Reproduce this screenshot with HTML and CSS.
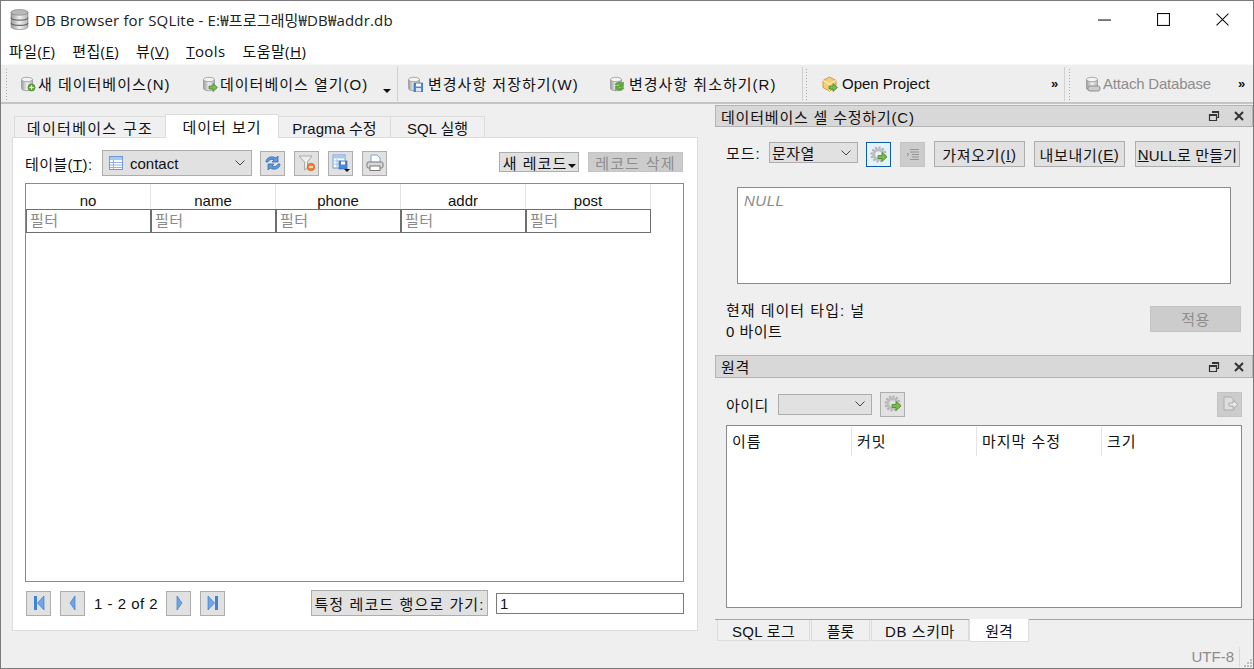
FILE: index.html
```html
<!DOCTYPE html>
<html lang="ko">
<head>
    <meta charset="UTF-8">
    <title>DB Browser for SQLite</title>
    <link rel="stylesheet" href="styles.css">
</head>
<body>
<svg class="defs" width="0" height="0">
    <defs>
        <linearGradient id="can" x1="0" x2="1" y1="0" y2="0">
            <stop offset="0" stop-color="#9c9c9c"/>
            <stop offset="0.5" stop-color="#f0f0f0"/>
            <stop offset="1" stop-color="#b4b4b4"/>
        </linearGradient>
        <symbol id="db" viewBox="0 0 16 16">
            <path d="M1.5 3.5v9c0 1.3 2.5 2.2 5.5 2.2s5.5-.9 5.5-2.2v-9z" fill="url(#can)" stroke="#999" stroke-width=".8"/>
            <ellipse cx="7" cy="3.5" rx="5.5" ry="2.2" fill="#f4f4f4" stroke="#999" stroke-width=".8"/>
        </symbol>
        <symbol id="gear" viewBox="0 0 18 18">
            <circle cx="8.5" cy="8.5" r="4.800" fill="none" stroke="#bdbdbd" stroke-width="3"/>
            <circle cx="8.5" cy="8.5" r="7" fill="none" stroke="#b0b0b0" stroke-width="2" stroke-dasharray="2 1.65"/>
            <path d="M8 9.500h4v-3l5 4.500-5 4.500v-3H8z" fill="#7cbc4a" stroke="#3f7d22" stroke-width=".7"/>
        </symbol>
        <symbol id="first" viewBox="0 0 14 16">
            <rect x="2" y="1" width="3" height="14" fill="#3f82d8"/>
            <path d="M12 1v14L5.500 8z" fill="#6ea6e8" stroke="#2f6fc4" stroke-width=".6"/>
        </symbol>
        <symbol id="prev" viewBox="0 0 14 16">
            <path d="M9 1v14L4 8z" fill="#6ea6e8" stroke="#2f6fc4" stroke-width=".6"/>
        </symbol>
        <symbol id="next" viewBox="0 0 14 16">
            <path d="M5 1v14l5-7z" fill="#6ea6e8" stroke="#2f6fc4" stroke-width=".6"/>
        </symbol>
        <symbol id="last" viewBox="0 0 14 16">
            <rect x="9" y="1" width="3" height="14" fill="#3f82d8"/>
            <path d="M2 1v14l6.500-7z" fill="#6ea6e8" stroke="#2f6fc4" stroke-width=".6"/>
        </symbol>
        <symbol id="undock" viewBox="0 0 12 12">
            <path d="M4 1.500h6.500v6H8.500M1.500 4.500h7v6h-7zM1.500 5.500h7M4 2.500h6.500" fill="none" stroke="#333" stroke-width="1.200"/>
        </symbol>
        <symbol id="shut" viewBox="0 0 12 12">
            <path d="M2 2l8 8M10 2l-8 8" fill="none" stroke="#333" stroke-width="2"/>
        </symbol>
    </defs>
</svg>

<div class="window">
    <!-- Title bar -->
    <header class="titlebar">
        <svg class="app-icon" viewBox="0 0 18 20">
            <path d="M1 3v14c0 1.500 3.500 2.600 8 2.600s8-1.100 8-2.600V3z" fill="url(#can)" stroke="#777" stroke-width=".6"/>
            <path d="M1 8c0 1.500 3.500 2.600 8 2.600s8-1.100 8-2.600M1 13c0 1.500 3.500 2.600 8 2.600s8-1.100 8-2.600" fill="none" stroke="#666" stroke-width="1.100"/>
            <ellipse cx="9" cy="3.200" rx="8" ry="2.700" fill="#b9b9b9" stroke="#777" stroke-width=".6"/>
        </svg>
        <span class="title-text">DB Browser for SQLite - E:₩프로그래밍₩DB₩addr.db</span>
        <div class="win-buttons">
            <svg viewBox="0 0 12 12"><path d="M0 6.500h12" stroke="#111" fill="none"/></svg>
            <svg viewBox="0 0 12 12"><rect x=".5" y=".5" width="11" height="11" stroke="#111" fill="none"/></svg>
            <svg viewBox="0 0 12 12"><path d="M.5.500l11 11M11.500.500l-11 11" stroke="#111" fill="none"/></svg>
        </div>
    </header>

    <!-- Menu -->
    <nav class="menubar">
        <span>파일(<u>F</u>)</span>
        <span>편집(<u>E</u>)</span>
        <span>뷰(<u>V</u>)</span>
        <span><u>T</u>ools</span>
        <span>도움말(<u>H</u>)</span>
    </nav>

    <!-- Toolbar -->
    <div class="toolbar">
        <div class="grip"></div>
        <div class="tool tool-new">
            <svg class="ico16" viewBox="0 0 16 16"><use href="#db"/><circle cx="11.500" cy="11.500" r="3.500" fill="#6bb03f" stroke="#3f7d22" stroke-width=".7"/><path d="M11.500 9.500v4M9.500 11.500h4" stroke="#fff"/></svg>
            <span>새 데이터베이스(N)</span>
        </div>
        <div class="tool tool-open">
            <svg class="ico16" viewBox="0 0 16 16"><use href="#db"/><path d="M7 10h4V7.500l4.500 4-4.500 4V13H7z" fill="#7cbc4a" stroke="#3f7d22" stroke-width=".7"/></svg>
            <span>데이터베이스 열기(O)</span>
            <i class="drop-arrow"></i>
        </div>
        <div class="sep sep-a"></div>
        <div class="tool tool-save">
            <svg class="ico16" viewBox="0 0 16 16"><use href="#db"/><rect x="7" y="7" width="9" height="9" fill="#4a8ad6" stroke="#2a62a8" stroke-width=".6"/><rect x="9" y="7.500" width="5" height="3" fill="#fff"/><rect x="9" y="12" width="5" height="3.500" fill="#dfe9f5"/></svg>
            <span>변경사항 저장하기(W)</span>
        </div>
        <div class="tool tool-revert">
            <svg class="ico16" viewBox="0 0 16 16"><use href="#db"/><path d="M6 8.500c1-2.500 5-3.500 7-1.500l1.500-1v4.500H10l1.500-1.500c-1.500-1-3.500-.5-4 .5z" fill="#5cae3c" stroke="#3f7d22" stroke-width=".4"/><path d="M15 12c-1 2.500-5 3.500-7 1.500l-1.500 1V10H11l-1.500 1.500c1.500 1 3.500.5 4-.5z" fill="#5cae3c" stroke="#3f7d22" stroke-width=".4"/></svg>
            <span>변경사항 취소하기(R)</span>
        </div>
        <div class="sep sep-b"></div>
        <div class="grip"></div>
        <div class="tool tool-project">
            <svg class="ico16" viewBox="0 0 16 16"><path d="M7.500 1l6.500 3.500v7L7.500 15 1 11.500v-7z" fill="#f4cf7a" stroke="#c9932e" stroke-width=".9"/><path d="M1 4.500l6.500 3.500L14 4.500M7.500 8v7" fill="none" stroke="#fff3cf"/><path d="M7 10h4V7.500l4.500 4-4.500 4V13H7z" fill="#7cbc4a" stroke="#3f7d22" stroke-width=".7"/></svg>
            <span>Open Project</span>
        </div>
        <span class="more more-a">»</span>
        <div class="sep sep-c"></div>
        <div class="grip"></div>
        <div class="tool tool-attach disabled">
            <svg class="ico16" viewBox="0 0 16 16"><use href="#db"/><rect x="3" y="10" width="12" height="5" rx="2" fill="#ccc" stroke="#8f8f8f"/></svg>
            <span>Attach Database</span>
        </div>
        <span class="more more-b">»</span>
    </div>

    <main class="workspace">
        <!-- Left: data browser -->
        <section class="browser">
            <div class="tabs">
                <span class="tab tab-1">데이터베이스 구조</span>
                <span class="tab tab-2 active">데이터 보기</span>
                <span class="tab tab-3">Pragma 수정</span>
                <span class="tab tab-4">SQL 실행</span>
            </div>
            <div class="panel">
                <div class="table-row">
                    <label class="table-label">테이블(<u>T</u>):</label>
                    <div class="combo combo-table">
                        <svg class="ico16" viewBox="0 0 16 16"><rect x="1.500" y="1.500" width="13" height="13" fill="#fff" stroke="#6f9bd8"/><rect x="2" y="2" width="12" height="3" fill="#a9c8ef"/><path d="M2 7.500h12M2 10h12M2 12.500h12M5.500 5v9" stroke="#8fb3e4"/></svg>
                        <span>contact</span>
                        <svg class="chev" viewBox="0 0 10 6"><path d="M.5.500L5 5 9.500.500" fill="none" stroke="#444"/></svg>
                    </div>
                    <div class="icon-btn btn-refresh">
                        <svg class="ico18" viewBox="0 0 18 18"><path d="M2 8c0-4 5-7 10-4l2-2v6H8l2-2c-3-1.500-5 0-6 2z" fill="#5d9ae0" stroke="#2a62a8" stroke-width=".7"/><path d="M16 10c0 4-5 7-10 4l-2 2v-6h6l-2 2c3 1.500 5 0 6-2z" fill="#5d9ae0" stroke="#2a62a8" stroke-width=".7"/></svg>
                    </div>
                    <div class="icon-btn">
                        <svg class="ico18" viewBox="0 0 18 18"><path d="M1 2h13L9.500 8v6l-3 2V8z" fill="#eee" stroke="#aaa"/><circle cx="13" cy="13" r="3.800" fill="#e8833a" stroke="#bf5d18" stroke-width=".6"/><path d="M11 13h4" stroke="#fff" stroke-width="1.300"/></svg>
                    </div>
                    <div class="icon-btn">
                        <svg class="ico18" viewBox="0 0 18 18"><rect x="1" y="1" width="12" height="13" fill="#fff" stroke="#6f9bd8"/><rect x="1.500" y="1.500" width="11" height="3" fill="#a9c8ef"/><path d="M2 7h10M2 10h10M5 5v9" stroke="#9dbce6"/><rect x="7" y="7" width="8" height="8" fill="#4a8ad6" stroke="#2a62a8" stroke-width=".6"/><rect x="9" y="7.500" width="4" height="3" fill="#fff"/><path d="M12 15h6l-3 3z" fill="#111"/></svg>
                    </div>
                    <div class="icon-btn">
                        <svg class="ico18" viewBox="0 0 18 18"><path d="M5 1h6l3 3v5H5z" fill="#fff" stroke="#7ba4d8"/><rect x="1" y="8" width="16" height="6" rx="1.500" fill="#d8d8d8" stroke="#777"/><rect x="4" y="12" width="10" height="4.500" fill="#fff" stroke="#777"/></svg>
                    </div>
                    <div class="record-btns">
                        <div class="btn btn-newrec">새 레코드<i class="small-arrow"></i></div>
                        <div class="btn btn-delrec disabled">레코드 삭제</div>
                    </div>
                </div>

                <div class="grid">
                    <div class="grid-head">
                        <span>no</span><span>name</span><span>phone</span><span>addr</span><span>post</span>
                    </div>
                    <div class="grid-filter">
                        <span>필터</span><span>필터</span><span>필터</span><span>필터</span><span>필터</span>
                    </div>
                </div>

                <div class="pager">
                    <div class="icon-btn"><svg class="ico16" viewBox="0 0 14 16"><use href="#first"/></svg></div>
                    <div class="icon-btn"><svg class="ico16" viewBox="0 0 14 16"><use href="#prev"/></svg></div>
                    <span class="page-text">1 - 2 of 2</span>
                    <div class="icon-btn"><svg class="ico16" viewBox="0 0 14 16"><use href="#next"/></svg></div>
                    <div class="icon-btn"><svg class="ico16" viewBox="0 0 14 16"><use href="#last"/></svg></div>
                    <div class="btn btn-goto">특정 레코드 행으로 가기:</div>
                    <div class="goto-input">1</div>
                </div>
            </div>
        </section>

        <!-- Right: docks -->
        <aside class="docks">
            <div class="dock-title">
                <span>데이터베이스 셀 수정하기(C)</span>
                <svg viewBox="0 0 12 12"><use href="#undock"/></svg>
                <svg viewBox="0 0 12 12"><use href="#shut"/></svg>
            </div>
            <div class="mode-row">
                <label>모드:</label>
                <div class="combo combo-mode">
                    <span>문자열</span>
                    <svg class="chev" viewBox="0 0 10 6"><path d="M.5.500L5 5 9.500.500" fill="none" stroke="#444"/></svg>
                </div>
                <div class="icon-btn focused"><svg class="ico18" viewBox="0 0 18 18"><use href="#gear"/></svg></div>
                <div class="icon-btn disabled-bg">
                    <svg class="ico16" viewBox="0 0 16 16"><path d="M5 2.500h9M5 5h9M7 7.500h7M7 10h7M5 12.500h9M2 6l2 1.500L2 9" fill="none" stroke="#8c8c8c"/></svg>
                </div>
                <div class="btn btn-import">가져오기(<u>I</u>)</div>
                <div class="btn btn-export">내보내기(<u>E</u>)</div>
                <div class="btn btn-null"><u>N</u>ULL로 만들기</div>
            </div>
            <div class="cell-editor">NULL</div>
            <div class="cell-info">
                <div class="cell-text">
                    <div class="cell-type">현재 데이터 타입: 널</div>
                    <div>0 바이트</div>
                </div>
                <div class="btn btn-apply disabled">적용</div>
            </div>

            <div class="dock-title dock-remote">
                <span>원격</span>
                <svg viewBox="0 0 12 12"><use href="#undock"/></svg>
                <svg viewBox="0 0 12 12"><use href="#shut"/></svg>
            </div>
            <div class="remote-row">
                <label>아이디</label>
                <div class="combo combo-id">
                    <svg class="chev" viewBox="0 0 10 6"><path d="M.5.500L5 5 9.500.500" fill="none" stroke="#444"/></svg>
                </div>
                <div class="icon-btn"><svg class="ico18" viewBox="0 0 18 18"><use href="#gear"/></svg></div>
                <div class="icon-btn disabled-bg push-right">
                    <svg class="ico18" viewBox="0 0 18 18"><path d="M3 2h7l3 3v10H3z" fill="#ddd" stroke="#a5a5a5"/><path d="M8 8h4V5.500l5 4-5 4V11H8z" fill="#e8e8e8" stroke="#a5a5a5"/></svg>
                </div>
            </div>
            <div class="tree">
                <div class="tree-head">
                    <span>이름</span><span>커밋</span><span>마지막 수정</span><span>크기</span>
                </div>
            </div>
            <div class="dock-tabs">
                <span class="dtab dtab-1">SQL 로그</span>
                <span class="dtab dtab-2">플롯</span>
                <span class="dtab dtab-3">DB 스키마</span>
                <span class="dtab dtab-4 active">원격</span>
            </div>
        </aside>
    </main>

    <footer class="statusbar">
        <span class="encoding">UTF-8</span>
        <i class="status-sep"></i>
        <svg class="size-grip" viewBox="0 0 8 8"><path d="M6 0h2v2H6zM3 3h2v2H3zM6 3h2v2H6zM0 6h2v2H0zM3 6h2v2H3zM6 6h2v2H6z" fill="#bdbdbd"/></svg>
    </footer>
</div>
</body>
</html>
```

FILE: styles.css
```css
/* Reset */
* {
    margin: 0;
    padding: 0;
    box-sizing: border-box;
}

body {
    width: 1254px;
    height: 669px;
    overflow: hidden;
    font-family: "Liberation Sans", "Noto Sans CJK KR", sans-serif;
    font-size: 15px;
    color: #111;
    background-color: #efefef;
}

.defs {
    position: absolute;
}

.window {
    width: 1254px;
    height: 669px;
    display: flex;
    flex-direction: column;
    border: 1px solid #7a7a7a;
}

.ico16 {
    width: 16px;
    height: 16px;
    flex: none;
}

.ico18 {
    width: 18px;
    height: 18px;
    flex: none;
}

/* Title bar */
.titlebar {
    height: 37px;
    flex: none;
    display: flex;
    align-items: center;
    padding-left: 9px;
    background-color: #fff;
}

.app-icon {
    width: 19px;
    height: 21px;
}

.title-text {
    margin-left: 6px;
    font-family: "Open Sans", "Noto Sans CJK KR", sans-serif;
    font-size: 15px;
    letter-spacing: .17px;
    color: #222;
}

.win-buttons {
    margin-left: auto;
    display: flex;
    gap: 46px;
    padding-right: 24px;
}

.win-buttons svg {
    width: 13px;
    height: 13px;
}

/* Menu */
.menubar {
    height: 26px;
    flex: none;
    display: flex;
    align-items: baseline;
    padding: 2px 0 0 8px;
    gap: 17px;
    background-color: #fff;
    font-family: "Open Sans", "Noto Sans CJK KR", sans-serif;
    font-size: 15px;
    letter-spacing: .4px;
}

/* Toolbar */
.toolbar {
    height: 40px;
    flex: none;
    display: flex;
    align-items: center;
    background-color: #eeeeee;
    border-top: 1px solid #f8f8f8;
    border-bottom: 2px solid #c4c4c4;
    padding-left: 4px;
}

.grip {
    width: 3px;
    height: 32px;
    flex: none;
    background-image: radial-gradient(#a9a9a9 40%, transparent 45%);
    background-size: 3px 3px;
}

.tool {
    display: flex;
    align-items: center;
    gap: 2px;
    flex: none;
    position: relative;
    letter-spacing: 1px;
}

.tool-new { margin-left: 12px; width: 182px; }
.tool-open { width: 195px; }
.tool-save { margin-left: 9px; width: 202px; gap: 5px; }
.tool-revert { width: 193px; gap: 4px; }
.tool-project { margin-left: 14px; width: 229px; gap: 4px; letter-spacing: 0; }
.tool-attach { margin-left: 14px; width: 153px; letter-spacing: -.2px; }

.disabled {
    color: #8d8d8d;
}

.drop-arrow {
    position: absolute;
    left: 181px;
    top: 16px;
    border: 4px solid transparent;
    border-top: 4px solid #111;
    border-bottom: 0;
}

.sep {
    width: 1px;
    height: 34px;
    flex: none;
    background-color: #d0d0d0;
}

.sep-b { margin-right: 2px; }
.sep-c { margin: 0 3px 0 5px; }

.more {
    font-weight: bold;
    font-size: 13px;
    flex: none;
    width: 8px;
    line-height: 14px;
}

/* Main layout */
.workspace {
    flex: 1;
    min-height: 0;
    display: flex;
}

.browser {
    width: 713px;
    flex: none;
    padding: 10px 0 0 11px;
}

.tabs {
    display: flex;
    align-items: flex-end;
    height: 23px;
    padding-left: 2px;
    position: relative;
    z-index: 1;
}

.tab {
    height: 21px;
    display: flex;
    align-items: center;
    justify-content: center;
    background-color: #f0f0f0;
    border: 1px solid #dcdcdc;
    border-bottom: 0;
    margin-right: -1px;
}

.tab-1 { width: 152px; letter-spacing: 1.300px; }
.tab-2 { width: 114px; letter-spacing: 1px; }
.tab-3 { width: 113px; }
.tab-4 { width: 95px; }

.tab.active {
    height: 24px;
    background-color: #fff;
    margin-bottom: -1px;
}

.panel {
    width: 686px;
    height: 494px;
    background-color: #fff;
    border: 1px solid #dcdcdc;
    padding: 12px 12px 0 12px;
}

.table-row {
    height: 26px;
    display: flex;
    align-items: center;
}

.table-label {
    width: 77px;
    flex: none;
    letter-spacing: .4px;
}

.combo {
    display: flex;
    align-items: center;
    background-color: #e1e1e1;
    border: 1px solid #adadad;
    flex: none;
}

.chev {
    width: 10px;
    height: 6px;
    margin-left: auto;
    flex: none;
}

.combo-table {
    width: 150px;
    height: 26px;
    padding: 0 6px 0 5px;
    gap: 6px;
    margin-right: 8px;
}

.icon-btn {
    width: 25px;
    height: 25px;
    display: flex;
    align-items: center;
    justify-content: center;
    background-color: #e1e1e1;
    border: 1px solid #adadad;
    flex: none;
    margin-right: 9px;
}

.icon-btn.focused {
    background-color: #e5f1fb;
    border: 1px solid #0d5ea8;
}

.icon-btn.disabled-bg {
    background-color: #c9c9c9;
    border-color: #c0c0c0;
    opacity: .9;
}

.btn {
    display: flex;
    align-items: center;
    justify-content: center;
    background-color: #e1e1e1;
    border: 1px solid #adadad;
    flex: none;
    white-space: nowrap;
}

.btn.disabled {
    background-color: #cccccc;
    border-color: #c4c4c4;
}

.record-btns {
    margin: 0 2px 2px auto;
    display: flex;
    gap: 9px;
}

.btn-newrec { width: 80px; height: 20px; position: relative; padding-right: 8px; letter-spacing: 1px; }
.btn-delrec { width: 95px; height: 20px; letter-spacing: 1.200px; }

.small-arrow {
    position: absolute;
    right: 2px;
    bottom: 3px;
    border: 4px solid transparent;
    border-top: 4px solid #111;
    border-bottom: 0;
}

/* Grid */
.grid {
    width: 659px;
    height: 399px;
    margin-top: 7px;
    border: 1px solid #8a8a8a;
    background-color: #fff;
}

.grid-head,
.grid-filter {
    display: grid;
    grid-template-columns: repeat(5, 125px);
}

.grid-head {
    height: 25px;
}

.grid-head span {
    display: flex;
    align-items: flex-end;
    justify-content: center;
    line-height: 17px;
    border-right: 1px solid #e4e4e4;
}

.grid-filter {
    height: 23px;
    width: 625px;
}

.grid-filter span {
    border: 1px solid #6e6e6e;
    padding-left: 3px;
    line-height: 22px;
    letter-spacing: .5px;
    color: #8a8a8a;
}

/* Pager */
.pager {
    width: 659px;
    height: 26px;
    margin-top: 8px;
    display: flex;
    align-items: center;
}

.pager .icon-btn {
    margin-right: 9px;
}

.pager .icon-btn:first-child {
    margin-left: 1px;
}

.page-text {
    width: 72px;
    flex: none;
    letter-spacing: .5px;
}

.btn-goto {
    width: 177px;
    height: 26px;
    margin-left: 77px;
    letter-spacing: 1.100px;
}

.goto-input {
    width: 188px;
    height: 21px;
    margin-left: 8px;
    border: 1px solid #7a7a7a;
    padding-left: 3px;
    line-height: 19px;
    background-color: #fff;
}

/* Docks */
.docks {
    flex: 1;
    min-width: 0;
    padding: 1px 0 0 1px;
}

.dock-title {
    height: 22px;
    display: flex;
    align-items: center;
    background-color: #d8d8d8;
    border: 1px solid #b4b4b4;
    padding-left: 5px;
    padding-right: 7px;
    gap: 13px;
}

.dock-title span {
    margin-right: auto;
    letter-spacing: .8px;
}

.dock-title svg {
    width: 12px;
    height: 12px;
}

.mode-row {
    height: 40px;
    margin-top: 12px;
    display: flex;
    align-items: flex-start;
    padding: 2px 0 0 11px;
}

.mode-row label {
    width: 43px;
    flex: none;
    line-height: 23px;
    letter-spacing: 1px;
}

.mode-row > * {
    margin-top: 1px;
}

.combo-mode {
    width: 89px;
    height: 21px;
    padding: 0 6px 0 2px;
    margin-right: 8px;
    letter-spacing: .5px;
}

.btn-import { width: 91px; height: 26px; margin-right: 9px; margin-top: 0; letter-spacing: .7px; }
.btn-export { width: 91px; height: 26px; margin-right: 10px; margin-top: 0; letter-spacing: .7px; }
.btn-null { width: 105px; height: 26px; margin-top: 0; letter-spacing: .2px; }

.cell-editor {
    width: 494px;
    height: 97px;
    margin: 8px 0 0 22px;
    background-color: #fff;
    border: 1px solid #8a8a8a;
    padding: 4px 6px;
    font-style: italic;
    letter-spacing: .5px;
    color: #8a8a8a;
}

.cell-info {
    height: 64px;
    display: flex;
    justify-content: space-between;
    padding: 13px 12px 0 11px;
    line-height: 21px;
    letter-spacing: .5px;
}

.cell-text {
    padding-top: 3px;
}

.cell-type {
    letter-spacing: 1px;
}

.btn-apply {
    width: 91px;
    height: 26px;
    margin-top: 9px;
}

.dock-remote {
    margin-top: 7px;
    height: 23px;
}

.remote-row {
    height: 26px;
    margin-top: 13px;
    display: flex;
    align-items: center;
    padding-left: 11px;
}

.remote-row label {
    width: 52px;
    flex: none;
    letter-spacing: .5px;
}

.combo-id {
    width: 94px;
    height: 21px;
    padding-right: 6px;
    margin-right: 8px;
}

.push-right {
    margin-left: auto;
    margin-right: 11px;
}

.tree {
    width: 516px;
    height: 183px;
    margin: 8px 0 0 11px;
    background-color: #fff;
    border: 1px solid #8a8a8a;
}

.tree-head {
    height: 29px;
    margin-top: 1px;
    display: grid;
    grid-template-columns: 125px 125px 125px 125px;
}

.tree-head span {
    padding-left: 5px;
    line-height: 29px;
    letter-spacing: 1px;
    border-right: 1px solid #e4e4e4;
}

.tree-head span:last-child {
    border-right: 0;
}

.dock-tabs {
    height: 22px;
    margin-top: 11px;
    border-top: 1px solid #a5a5a5;
    display: flex;
    padding-left: 2px;
}

.dtab {
    height: 21px;
    display: flex;
    align-items: center;
    justify-content: center;
    border: 1px solid #dcdcdc;
    border-top: 0;
    background-color: #f0f0f0;
    margin-right: 1px;
}

.dtab-1 { width: 93px; letter-spacing: .3px; }
.dtab-2 { width: 59px; }
.dtab-3 { width: 98px; margin-right: 0; letter-spacing: .6px; }
.dtab-4 { width: 60px; }

.dtab.active {
    margin-top: -1px;
    height: 23px;
    background-color: #fff;
}

/* Status */
.statusbar {
    position: relative;
    height: 1px;
    flex: none;
}

.encoding {
    position: absolute;
    right: 19px;
    bottom: 3px;
    color: #8c8c8c;
}

.status-sep {
    position: absolute;
    right: 13px;
    bottom: 1px;
    width: 1px;
    height: 20px;
    background-color: #d8d8d8;
}

.size-grip {
    position: absolute;
    right: 1px;
    bottom: 1px;
    width: 8px;
    height: 8px;
}
```
